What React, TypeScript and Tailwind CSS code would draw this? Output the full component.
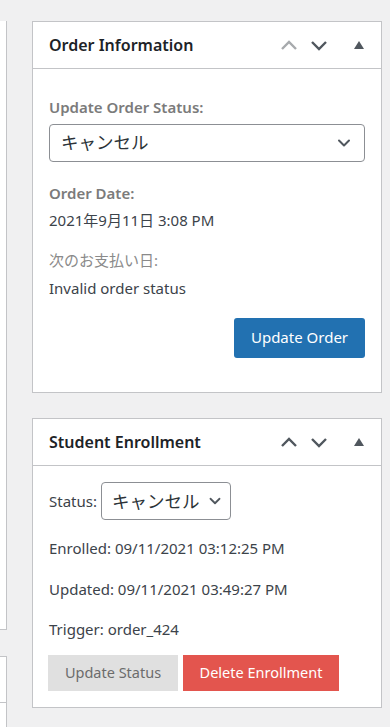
import { ChevronDown } from "lucide-react";

const font = { fontFamily: '"Noto Sans", "Noto Sans CJK JP", sans-serif' };

function Chevron({ up, className }: { up?: boolean; className: string }) {
  return (
    <svg width="20" height="20" viewBox="0 0 20 20" className={className}>
      <path d={up ? "M3 14 L10 7 L17 14" : "M3 7 L10 14 L17 7"} fill="none" stroke="currentColor" strokeWidth="2.4" />
    </svg>
  );
}

function BoxHeader({ title, first }: { title: string; first?: boolean }) {
  return (
    <div className="flex items-center h-[47px] border-b border-[#c3c4c7] pl-[16px] pr-[16px]">
      <h2 className="flex-1 text-[16px] font-semibold text-[#1d2327]">{title}</h2>
      <Chevron up className={`${first ? "text-[#a7aaad]" : "text-[#50575e]"} mr-[10px]`} />
      <Chevron className="text-[#50575e] mr-[24px]" />
      <svg width="12" height="10" viewBox="0 0 12 10" className="text-[#50575e]">
        <path d="M6 1 L11 9 L1 9 Z" fill="currentColor" />
      </svg>
    </div>
  );
}

export default function App() {
  return (
    <div className="min-h-[727px] bg-[#f0f0f1] flex pt-[21px]" style={font}>
      <div className="w-[7px] shrink-0 flex flex-col">
        <div className="h-[609px] bg-white border-r border-b border-[#c3c4c7]" />
        <div className="mt-[26px] flex-1 bg-white border-r border-t border-[#c3c4c7]">
          <div className="h-[46px] border-b border-[#c3c4c7]" />
        </div>
      </div>

      <div className="ml-[25px] w-[350px] flex flex-col gap-[25px]">
        <section className="bg-white border border-[#c3c4c7] h-[372px]">
          <BoxHeader title="Order Information" first />
          <div className="px-[16px] pt-[27px]">
            <p className="text-[15px] font-semibold text-[#7b7b7b]">Update Order Status:</p>
            <div className="mt-[5px] h-[38px] border border-[#8c8f94] rounded-[4px] flex items-center pl-[11px] pr-[10px]">
              <span className="flex-1 text-[17.5px] text-[#2c3338] whitespace-nowrap">キャンセル</span>
              <ChevronDown size={20} strokeWidth={2.4} className="text-[#50575e]" />
            </div>
            <p className="mt-[20px] text-[15px] font-semibold text-[#7b7b7b]">Order Date:</p>
            <p className="mt-[5px] text-[15px] text-[#3c434a]">2021年9月11日 3:08 PM</p>
            <p className="mt-[17px] text-[15px] text-[#8a8a8a]">次のお支払い日:</p>
            <p className="mt-[6px] text-[15px] text-[#3c434a]">Invalid order status</p>
            <div className="flex justify-end mt-[18px]">
              <button className="h-[40px] w-[131px] rounded-[3px] bg-[#2271b1] text-white text-[15px]">Update Order</button>
            </div>
          </div>
        </section>

        <section className="bg-white border border-[#c3c4c7] h-[290px]">
          <BoxHeader title="Student Enrollment" />
          <div className="px-[15px] pt-[16px] text-[15px] text-[#3c434a]">
            <div className="flex items-center gap-[4px] pl-[1px]">
              <span>Status:</span>
              <div className="h-[38px] w-[130px] border border-[#8c8f94] rounded-[4px] flex items-center pl-[10px] pr-[6px]">
                <span className="flex-1 text-[17.5px] text-[#2c3338] whitespace-nowrap overflow-hidden">キャンセル</span>
                <ChevronDown size={18} strokeWidth={2.4} className="text-[#50575e] shrink-0" />
              </div>
            </div>
            <div className="pl-[1px]">
              <p className="mt-[17px]">Enrolled: 09/11/2021 03:12:25 PM</p>
              <p className="mt-[18px]">Updated: 09/11/2021 03:49:27 PM</p>
              <p className="mt-[18px]">Trigger: order_424</p>
            </div>
            <div className="flex gap-[5px] mt-[14px]">
              <button className="h-[36px] w-[130px] bg-[#e0e0e0] text-[#6c6c6c] text-[14.5px]">Update Status</button>
              <button className="h-[36px] w-[156px] bg-[#e3554e] text-white text-[14.5px]">Delete Enrollment</button>
            </div>
          </div>
        </section>
      </div>
    </div>
  );
}
